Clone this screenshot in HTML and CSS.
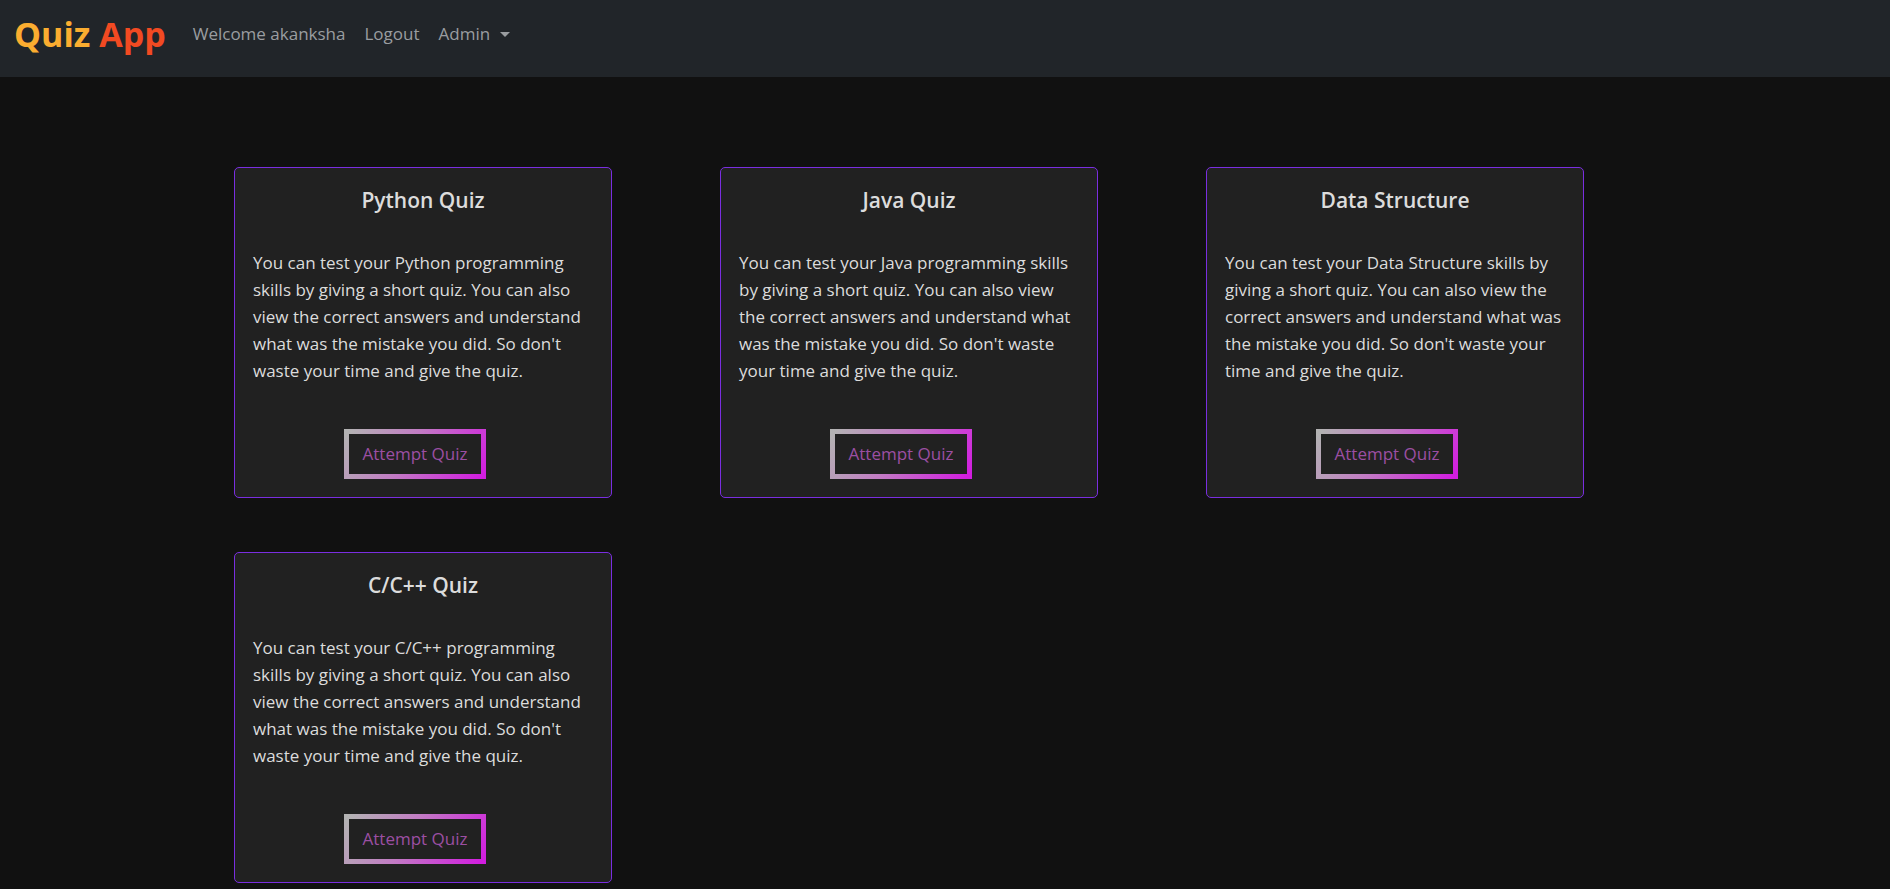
FILE: index.html
```html
<!DOCTYPE html>
<html lang="en">
<head>
<meta charset="utf-8">
<title>Quiz App</title>
<link rel="stylesheet" href="styles.css">
</head>
<body>
<nav class="navbar">
  <a class="brand" href="#"><span class="brand-quiz">Quiz</span> <span class="brand-app">App</span></a>
  <ul class="nav-links">
    <li><a href="#">Welcome akanksha</a></li>
    <li><a href="#">Logout</a></li>
    <li><a href="#" class="dropdown">Admin <span class="caret"></span></a></li>
  </ul>
</nav>
<main class="grid">
  <section class="card">
    <h5 class="card-title">Python Quiz</h5>
    <p class="card-text">You can test your Python programming skills by giving a short quiz. You can also view the correct answers and understand what was the mistake you did. So don't waste your time and give the quiz.</p>
    <div class="actions"><a href="#" class="btn">Attempt Quiz</a></div>
  </section>
  <section class="card">
    <h5 class="card-title">Java Quiz</h5>
    <p class="card-text">You can test your Java programming skills by giving a short quiz. You can also view the correct answers and understand what was the mistake you did. So don't waste your time and give the quiz.</p>
    <div class="actions"><a href="#" class="btn">Attempt Quiz</a></div>
  </section>
  <section class="card">
    <h5 class="card-title">Data Structure</h5>
    <p class="card-text">You can test your Data Structure skills by giving a short quiz. You can also view the correct answers and understand what was the mistake you did. So don't waste your time and give the quiz.</p>
    <div class="actions"><a href="#" class="btn">Attempt Quiz</a></div>
  </section>
  <section class="card">
    <h5 class="card-title">C/C++ Quiz</h5>
    <p class="card-text">You can test your C/C++ programming skills by giving a short quiz. You can also view the correct answers and understand what was the mistake you did. So don't waste your time and give the quiz.</p>
    <div class="actions"><a href="#" class="btn">Attempt Quiz</a></div>
  </section>
</main>
</body>
</html>
```
FILE: styles.css
```css
* { box-sizing: border-box; }
html, body { margin: 0; padding: 0; }
body {
  background: #111111;
  color: #dee2e6;
  font-family: "Open Sans", "Noto Sans", sans-serif;
  font-size: 17px;
  line-height: 27px;
}
a { text-decoration: none; }

.navbar {
  height: 77px;
  background: #212529;
  display: flex;
  align-items: flex-start;
  padding: 17px 14px 0;
}
.brand {
  font-weight: 700;
  font-size: 34px;
  line-height: 34px;
  margin-right: 27px;
  white-space: nowrap;
}
.brand-quiz { color: #fbad30; }
.brand-app { color: #f24a22; }
.nav-links {
  display: flex;
  list-style: none;
  margin: 3px 0 0;
  padding: 0;
  gap: 19px;
}
.nav-links a {
  color: #9a9da0;
  font-size: 17px;
  line-height: 27px;
  display: flex;
  align-items: center;
}
.caret {
  display: inline-block;
  width: 0;
  height: 0;
  margin-left: 10px;
  margin-top: 1px;
  border-top: 5px solid #9a9da0;
  border-left: 5px solid transparent;
  border-right: 5px solid transparent;
}

.grid {
  display: grid;
  grid-template-columns: repeat(3, 378px);
  column-gap: 108px;
  row-gap: 54px;
  padding: 90px 0 40px 234px;
}
.card {
  background: #212121;
  border: 1px solid #7a2ee0;
  border-radius: 5px;
  padding: 20px 18px 18px;
}
.card-title {
  margin: 0 0 37px;
  text-align: center;
  font-size: 21px;
  line-height: 24px;
  font-weight: 600;
  color: #dcdcdc;
}
.card-text {
  margin: 0 0 45px;
  color: #dcdcdc;
  height: 135px;
}
.actions {
  display: flex;
  justify-content: center;
  padding-right: 16px;
}
.btn {
  display: inline-block;
  height: 50px;
  padding: 6px 14px;
  border: 5px solid;
  border-image: linear-gradient(120deg, #b3b3b3 0%, #c27bc4 45%, #d21de0 100%) 1;
  color: #9c4fa3;
  font-size: 17px;
  line-height: 28px;
}
```
